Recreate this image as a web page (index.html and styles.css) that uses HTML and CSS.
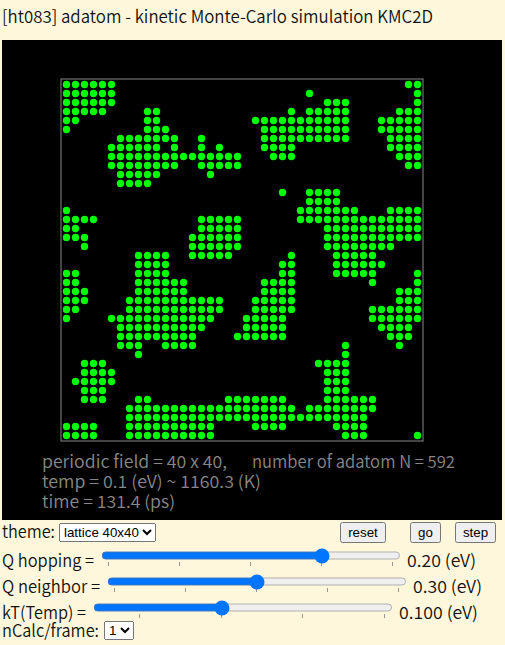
FILE: index.html
```html
<!DOCTYPE html>
<html lang="en">
<head>
<meta charset="utf-8">
<title>adatom - KMC2D</title>
<link rel="stylesheet" href="styles.css">
</head>
<body>
<header class="title"><span class="t" data-w="431">[ht083] adatom - kinetic Monte-Carlo simulation KMC2D</span></header>
<svg class="field" width="500" height="480" viewBox="2 40 500 480">
  <rect class="frame" x="61" y="79" width="362" height="362"/>
  <g id="atoms"></g>
  <g class="info">
    <text x="42" y="468" textLength="185" lengthAdjust="spacingAndGlyphs">periodic field = 40 x 40,</text>
    <text x="252" y="468" textLength="203" lengthAdjust="spacingAndGlyphs">number of adatom N = 592</text>
    <text x="42" y="488" textLength="219" lengthAdjust="spacingAndGlyphs">temp = 0.1 (eV) ~ 1160.3 (K)</text>
    <text x="42" y="508" textLength="133" lengthAdjust="spacingAndGlyphs">time = 131.4 (ps)</text>
  </g>
</svg>
<div class="toolbar">
  <label class="t" data-w="53">theme:</label>
  <select class="theme"><option>lattice 40x40</option></select>
  <button class="reset">reset</button><button class="go">go</button><button class="step">step</button>
</div>
<div class="row">
  <label class="t" data-w="92">Q hopping =</label>
  <input type="range" min="0.05" max="0.25" step="0.01" value="0.20" list="hop">
  <span class="t" data-w="69">0.20 (eV)</span>
</div>
<div class="row">
  <label class="t" data-w="98">Q neighbor =</label>
  <input type="range" min="0.1" max="0.5" step="0.01" value="0.30" list="nei">
  <span class="t" data-w="69">0.30 (eV)</span>
</div>
<div class="row">
  <label class="t" data-w="84">kT(Temp) =</label>
  <input type="range" min="0.026" max="0.2" step="0.001" value="0.1" list="temp">
  <span class="t" data-w="79">0.100 (eV)</span>
</div>
<div class="calc">
  <label class="t" data-w="97">nCalc/frame:</label>
  <select class="count"><option>1</option></select>
</div>
<datalist id="hop"><option value="0.05"></option><option value="0.10"></option><option value="0.15"></option><option value="0.20"></option><option value="0.25"></option></datalist>
<datalist id="nei"><option value="0.1"></option><option value="0.2"></option><option value="0.3"></option><option value="0.4"></option><option value="0.5"></option></datalist>
<datalist id="temp"><option value="0.05"></option><option value="0.1"></option><option value="0.15"></option><option value="0.2"></option></datalist>
<script src="script.js"></script>
</body>
</html>
```
FILE: styles.css
```css
* { box-sizing: border-box; }
body { margin: 0 2px; background: #fff7dc; color: #111; font: 350 17px/20px "Noto Sans CJK JP", "Noto Sans", sans-serif; overflow: hidden; }
.title { height: 40px; padding-top: 6px; }
.t { display: inline-block; white-space: nowrap; flex: none; }
.t span { display: inline-block; transform-origin: 0 50%; }
.field { display: block; background: #000; }
.frame { fill: none; stroke: #888; stroke-width: 1; }
#atoms { fill: #0f0; }
.info { fill: #888; font-size: 17px; }
.toolbar { display: flex; height: 25px; align-items: center; }
.toolbar .t { margin-top: -3px; }
select, button { font: 13.333px "Liberation Sans", Arial, sans-serif; }
select { margin: 0; height: 19px; }
.theme { width: 97px; margin-left: 4px; }
button { height: 21px; margin: 0; padding: 0; }
.reset { width: 46px; margin-left: 184px; }
.go { width: 31px; margin-left: 24px; }
.step { width: 41px; margin-left: 14px; }
.row { display: flex; height: 26px; }
.row .t { margin-top: 5px; }
.row input { width: 300px; height: 21px; margin: 0 6px 0 7px; flex: none; }
.calc { display: flex; height: 22px; margin-top: -2px; }
.calc .t { margin-top: -1px; }
.count { width: 30px; margin: 0 0 0 5px; }
```
FILE: script.js
```js
// Occupied column ranges of each lattice row
const rows = [
  "0-5 38-39", "0-5 27 39", "0-5 29-31 39", "0-4 9-10 25 27-31 37-39",
  "0-1 9-10 21-31 35-39", "0 9-11 22-31 35-39", "6-12 15 22-31 36-39",
  "5-10 12 15 17 22-25 36-39", "5-19 23-25 37-39", "5-12 15-19 38-39",
  "6-10 16", "6-9", "24 27-30", "27-30", "0 26-32 36-39", "0-3 15-19 26-39",
  "0-1 15-19 29-39", "0-2 14-19 29-39", "2 14-19 29-36", "8-11 14-18 25 30-34",
  "8-11 24-25 30-35", "0-1 8-11 24-25 30-34 39", "0-1 8-13 22-25 34 39",
  "0-2 8-13 22-25 37-39", "0-2 7-17 21-25 37-39", "0-1 7-17 21-25 34-39",
  "0 5-16 20-24 34-39", "6-15 20-24 35-38", "6-14 19-24 36-38",
  "6-8 11-14 31 37", "8 31", "2-4 28-31", "2-5 29-31", "1-5 29-31",
  "2-4 29-31", "2-4 8-9 18-24 29-34", "7-25 27-34", "7-33",
  "0-3 7-16 21-24 30-33", "0-3 7-16 31-33 39"
];
let dots = "";
rows.forEach((row, j) => row.split(" ").forEach(run => {
  const [a, b = a] = run.split("-").map(Number);
  for (let i = a; i <= b; i++) dots += `<circle cx="${66.5 + 9 * i}" cy="${84.5 + 9 * j}" r="3.7"/>`;
}));
document.getElementById("atoms").innerHTML = dots;

document.querySelectorAll(".t").forEach(el => {
  const inner = document.createElement("span");
  inner.textContent = el.textContent;
  el.textContent = "";
  el.append(inner);
  const width = inner.getBoundingClientRect().width;
  inner.style.transform = `scaleX(${el.dataset.w / width})`;
  el.style.width = el.dataset.w + "px";
});
```
